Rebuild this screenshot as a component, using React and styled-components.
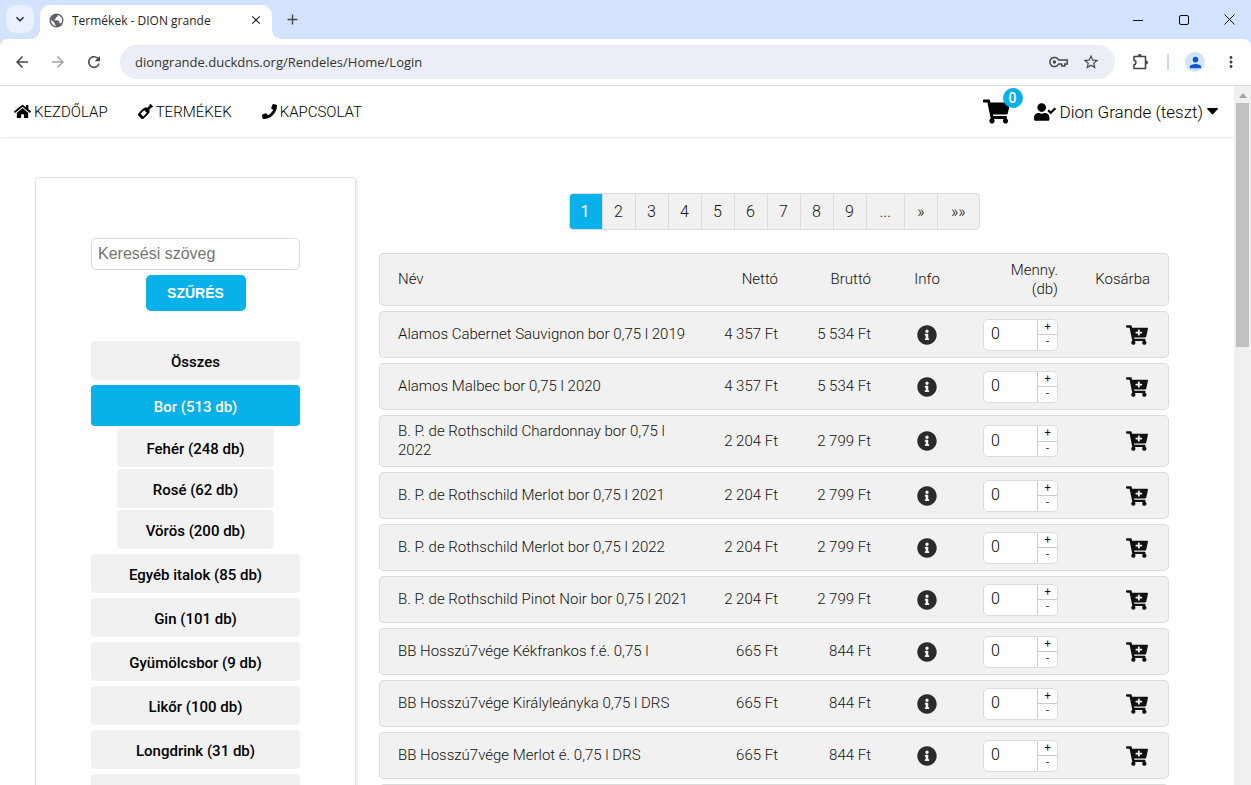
import { useState } from "react";
import styled, { createGlobalStyle, css } from "styled-components";
import {
  FaHome,
  FaWineBottle,
  FaPhone,
  FaShoppingCart,
  FaUserCheck,
  FaInfoCircle,
  FaCartPlus,
} from "react-icons/fa";
import {
  MdArrowBack,
  MdArrowForward,
  MdRefresh,
  MdOutlineStarBorder,
  MdMoreVert,
  MdPerson,
  MdClose,
  MdAdd,
  MdKeyboardArrowDown,
} from "react-icons/md";

const GlobalStyle = createGlobalStyle`
  * {
    box-sizing: border-box;
  }

  body {
    margin: 0;
    background: #fff;
    color: #111;
    font-family: Roboto, "Liberation Sans", sans-serif;
    font-size: 15px;
    font-weight: 300;
  }

  button,
  input {
    margin: 0;
    font: inherit;
    color: inherit;
  }

  button {
    padding: 0;
    border: 0;
    background: none;
  }

  svg {
    display: block;
    flex: none;
  }
`;

const Window = styled.div`
  display: flex;
  flex-direction: column;
  height: 100vh;
  overflow: hidden;
`;

/* Browser frame */

const Frame = styled.div`
  flex: none;
  background: #d3e3fd;
`;

const TabStrip = styled.div`
  display: flex;
  align-items: flex-end;
  height: 39px;
  padding-left: 6px;
`;

const TabSearch = styled.button`
  display: grid;
  place-items: center;
  width: 28px;
  height: 28px;
  margin: 0 6px 6px 0;
  border-radius: 10px;
  background: #e9f1fe;
  color: #1f1f1f;

  path {
    stroke: currentColor;
  }
`;

const Tab = styled.div`
  position: relative;
  display: flex;
  align-items: center;
  width: 232px;
  height: 34px;
  padding: 0 9px 4px;
  border-radius: 10px 10px 0 0;
  background: #fff;
  color: #1f1f1f;
  font: 400 12px "Open Sans", sans-serif;

  &::before,
  &::after {
    content: "";
    position: absolute;
    bottom: 0;
    width: 10px;
    height: 10px;
  }

  &::before {
    right: 100%;
    background: radial-gradient(circle at 0 0, transparent 10px, #fff 10px);
  }

  &::after {
    left: 100%;
    background: radial-gradient(circle at 100% 0, transparent 10px, #fff 10px);
  }
`;

const TabTitle = styled.span`
  flex: 1;
  padding-left: 8px;
`;

const NewTab = styled.button`
  padding: 0 12px 11px;
  color: #474747;
`;

const WindowButtons = styled.div`
  display: flex;
  align-self: stretch;
  margin-left: auto;
`;

const WindowButton = styled.button`
  display: grid;
  place-items: center;
  width: 46px;
  color: #000;

  &:last-child {
    width: 44px;
  }
`;

const Toolbar = styled.div`
  display: flex;
  align-items: center;
  height: 47px;
  padding: 0 11px 0 13px;
  border-bottom: 1px solid #dadce0;
  border-radius: 8px 8px 0 0;
  background: #fff;
  color: #474747;
`;

const NavButtons = styled.div`
  display: flex;
  gap: 18px;
`;

const ToolButton = styled.button`
  opacity: ${(props) => (props.disabled ? 0.5 : 1)};
`;

const AddressBar = styled.div`
  display: flex;
  flex: 1;
  align-items: center;
  gap: 14px;
  height: 34px;
  margin: 0 17px;
  padding: 0 15px;
  border-radius: 17px;
  background: #ebeef7;
`;

const Address = styled.input`
  flex: 1;
  min-width: 0;
  padding: 0;
  border: 0;
  outline: 0;
  background: none;
  color: #333;
  font: 400 13px "Open Sans", sans-serif;
`;

const ToolDivider = styled.span`
  width: 2px;
  height: 16px;
  margin: 0 16px 0 17px;
  background: #c7dafa;
`;

const Profile = styled.button`
  display: grid;
  place-items: center;
  width: 20px;
  height: 20px;
  margin-right: 17px;
  border-radius: 50%;
  background: #d3e3fd;
  color: #0b57d0;
`;

/* Page */

const Viewport = styled.div`
  display: flex;
  flex: 1;
  min-height: 0;
`;

const Page = styled.div`
  flex: 1;
  min-width: 0;
  overflow: hidden;
`;

const Scrollbar = styled.div`
  display: flex;
  flex-direction: column;
  align-items: center;
  width: 17px;
  background: #f0f0f0;
`;

const ScrollArrow = styled.span`
  margin: 7px 0 5px;
  border: 4px solid transparent;
  border-top: 0;
  border-bottom: 5px solid #a3a3a3;
`;

const ScrollThumb = styled.span`
  width: 13px;
  height: 244px;
  background: #c1c1c1;
`;

const Header = styled.header`
  display: flex;
  align-items: center;
  justify-content: space-between;
  height: 51px;
  padding: 0 16px 0 14px;
  box-shadow: 0 1px 3px rgba(0, 0, 0, 0.12);
  color: #000;
`;

const Menu = styled.nav`
  display: flex;
  gap: 30px;
`;

const MenuLink = styled.a`
  display: flex;
  align-items: center;
  gap: 3px;
  color: #000;
  text-decoration: none;
`;

const Account = styled.div`
  display: flex;
  align-items: center;
  gap: 24px;
`;

const CartLink = styled.a`
  position: relative;
  color: #000;
`;

const CartBadge = styled.span`
  position: absolute;
  top: -10px;
  right: -13px;
  width: 20px;
  border-radius: 50%;
  background: #08b1ea;
  color: #fff;
  font-size: 14px;
  font-weight: 500;
  line-height: 20px;
  text-align: center;
`;

const UserButton = styled.button`
  display: flex;
  align-items: center;
  gap: 4px;
  font-size: 17px;
`;

const Content = styled.main`
  display: flex;
  align-items: flex-start;
  gap: 23px;
  padding: 40px 65px 40px 35px;
`;

const Sidebar = styled.aside`
  flex: none;
  width: 321px;
  padding: 60px 55px;
  border: 1px solid #dee2e6;
  border-radius: 4px;
  box-shadow: 1px 1px 3px rgba(0, 0, 0, 0.1);
`;

const SearchForm = styled.form`
  display: flex;
  flex-direction: column;
  align-items: center;
  gap: 5px;
  margin-bottom: 30px;
`;

const SearchInput = styled.input`
  width: 100%;
  height: 32px;
  padding: 0 6px;
  border: 1px solid #d9d9d9;
  border-radius: 5px;
  font: 400 16px "Liberation Sans", sans-serif;

  &::placeholder {
    color: #757575;
  }
`;

const FilterButton = styled.button`
  width: 100px;
  height: 36px;
  border-radius: 5px;
  background: #08b1ea;
  color: #fff;
  font: 700 14px "Liberation Sans", sans-serif;
`;

const Categories = styled.div`
  display: flex;
  flex-direction: column;
  gap: 5px;
`;

const SubCategories = styled.div`
  display: flex;
  flex-direction: column;
  gap: 2px;
  margin-top: -3px;
  padding: 0 26px;
`;

const Category = styled.button`
  height: 39px;
  padding-top: 2px;
  border-radius: 4px;
  background: #f1f1f1;
  color: #000;
  font-weight: 500;

  ${(props) =>
    props.$active &&
    css`
      height: 41px;
      background: #08b1ea;
      color: #fff;
    `}
`;

const Products = styled.section`
  display: flex;
  flex: 1;
  flex-direction: column;
  align-items: center;
  gap: 18px;
  min-width: 0;
  padding-top: 16px;
`;

const Pagination = styled.nav`
  display: flex;
  height: 37px;
  overflow: hidden;
  border: 1px solid #dcdcdc;
  border-radius: 4px;
  background: #f1f1f1;
`;

const PageButton = styled.button`
  min-width: 33px;
  padding: 0 11px;
  border-left: 1px solid #dcdcdc;
  font-size: 16px;

  ${(props) =>
    props.$active &&
    css`
      margin: -1px 0 -1px -1px;
      border: 0;
      background: #08b1ea;
      color: #fff;
      font-weight: 400;
    `}

  ${(props) =>
    props.$wide &&
    css`
      padding: 0 13px;
    `}
`;

const Table = styled.table`
  width: 100%;
  table-layout: fixed;
  border-collapse: separate;
  border-spacing: 0 5px;
  line-height: 19px;
`;

const Row = styled.tr`
  height: ${(props) => (props.$head ? 53 : 47)}px;
`;

const cell = css`
  padding: 6px 0;
  border: solid #dcdcdc;
  border-width: 1px 0;
  background: #f1f1f1;
  font-weight: 300;
  text-align: ${(props) => props.$align || "left"};

  &:first-child {
    padding-left: 18px;
    border-left-width: 1px;
    border-radius: 5px 0 0 5px;
  }

  &:last-child {
    padding-right: 18px;
    border-right-width: 1px;
    border-radius: 0 5px 5px 0;
  }
`;

const HeadCell = styled.th`
  ${cell}

  &:nth-child(2) {
    width: 78px;
  }

  &:nth-child(3) {
    width: 93px;
  }

  &:nth-child(4) {
    width: 112px;
  }

  &:nth-child(5) {
    width: 75px;
  }

  &:nth-child(6) {
    width: 111px;
  }
`;

const Cell = styled.td`
  ${cell}
`;

const IconButton = styled.button`
  display: inline-block;
  vertical-align: middle;
  color: ${(props) => props.$color};
`;

const CartCell = styled(Cell)`
  && {
    padding-right: 20px;
  }
`;

const Stepper = styled.div`
  display: inline-flex;
  width: 75px;
  height: 32px;
  overflow: hidden;
  border: 1px solid #dcdcdc;
  border-radius: 5px;
  background: #fff;
  vertical-align: middle;
`;

const StepperInput = styled.input`
  flex: 1;
  min-width: 0;
  padding: 0 7px 2px;
  border: 0;
  outline: 0;
  background: none;
  color: #000;
  font-size: 16px;
`;

const StepperButtons = styled.div`
  display: flex;
  flex-direction: column;
  width: 20px;
  border-left: 1px solid #ccc;
`;

const StepperButton = styled.button`
  flex: 1;
  font-size: 11px;
  font-weight: 400;
  line-height: 14px;

  & + & {
    border-top: 1px solid #ccc;
  }
`;

const categories = [
  { name: "Összes" },
  {
    name: "Bor (513 db)",
    active: true,
    children: ["Fehér (248 db)", "Rosé (62 db)", "Vörös (200 db)"],
  },
  { name: "Egyéb italok (85 db)" },
  { name: "Gin (101 db)" },
  { name: "Gyümölcsbor (9 db)" },
  { name: "Likőr (100 db)" },
  { name: "Longdrink (31 db)" },
  { name: "Pálinka (120 db)" },
];

const pages = ["1", "2", "3", "4", "5", "6", "7", "8", "9", "...", "»", "»»"];

const products = [
  { name: "Alamos Cabernet Sauvignon bor 0,75 l 2019", net: "4 357 Ft", gross: "5 534 Ft" },
  { name: "Alamos Malbec bor 0,75 l 2020", net: "4 357 Ft", gross: "5 534 Ft" },
  { name: "B. P. de Rothschild Chardonnay bor 0,75 l 2022", net: "2 204 Ft", gross: "2 799 Ft" },
  { name: "B. P. de Rothschild Merlot bor 0,75 l 2021", net: "2 204 Ft", gross: "2 799 Ft" },
  { name: "B. P. de Rothschild Merlot bor 0,75 l 2022", net: "2 204 Ft", gross: "2 799 Ft" },
  { name: "B. P. de Rothschild Pinot Noir bor 0,75 l 2021", net: "2 204 Ft", gross: "2 799 Ft" },
  { name: "BB Hosszú7vége Kékfrankos f.é. 0,75 l", net: "665 Ft", gross: "844 Ft" },
  { name: "BB Hosszú7vége Királyleányka 0,75 l DRS", net: "665 Ft", gross: "844 Ft" },
  { name: "BB Hosszú7vége Merlot é. 0,75 l DRS", net: "665 Ft", gross: "844 Ft" },
  { name: "BB Hosszú7vége Olaszrizling 0,75 l", net: "665 Ft", gross: "844 Ft" },
];

const GlobeIcon = () => (
  <svg width="15" height="15" viewBox="0 0 15 15">
    <circle cx="7.5" cy="7.5" r="7" fill="#5f6368" />
    <path
      d="M8.6 2v1.6L7 4.5v1.3H5.6v1.4h3.2l1.6 1.6v1.4h1.4l.9-.6A5.6 5.6 0 0 0 8.6 2zM2 6.8l3.6 3v1.4l1.5 1.2V13A5.6 5.6 0 0 1 2 6.8z"
      fill="#fff"
    />
  </svg>
);

const KeyIcon = () => (
  <svg width="19" height="12" viewBox="0 0 19 12" fill="none" stroke="currentColor" strokeWidth="1.5">
    <path d="M9.6 4A4.6 4.6 0 1 0 9.6 8h3v2h3.2V8h2.4V4z" />
    <circle cx="5.4" cy="6" r="1.7" fill="currentColor" stroke="none" />
  </svg>
);

const PuzzleIcon = () => (
  <svg width="18" height="18" viewBox="0 0 18 18" fill="none" stroke="currentColor" strokeWidth="1.6">
    <path d="M2 3.5h11.5v12H2v-3.6c2.6-.6 2.6-4.2 0-4.8z" strokeLinejoin="round" />
    <path
      d="M5.7 3a2 2 0 0 1 4 0zM14 7.5a2 2 0 0 1 0 4z"
      fill="currentColor"
      stroke="none"
    />
  </svg>
);

const CaretIcon = () => (
  <svg width="11" height="7" fill="currentColor">
    <path d="M1 0h9q1.400 .2.600 1.300L6.200 6q-.7.700-1.400 0L.4 1.300Q-.4.200 1 0z" />
  </svg>
);

function BrowserFrame() {
  return (
    <Frame>
      <TabStrip>
        <TabSearch aria-label="Lapok keresése">
          <MdKeyboardArrowDown size={16} />
        </TabSearch>
        <Tab>
          <GlobeIcon />
          <TabTitle>Termékek - DION grande</TabTitle>
          <button aria-label="Lap bezárása">
            <MdClose size={14} />
          </button>
        </Tab>
        <NewTab aria-label="Új lap">
          <MdAdd size={17} />
        </NewTab>
        <WindowButtons>
          <WindowButton aria-label="Kis méret">
            <svg width="10" height="10" stroke="currentColor">
              <path d="M0 5.5h10" />
            </svg>
          </WindowButton>
          <WindowButton aria-label="Teljes méret">
            <svg width="10" height="10" fill="none" stroke="currentColor">
              <rect x=".5" y=".5" width="9" height="9" rx="1.5" />
            </svg>
          </WindowButton>
          <WindowButton aria-label="Bezárás">
            <svg width="11" height="11" stroke="currentColor">
              <path d="M.5.5l10 10M10.5.5l-10 10" />
            </svg>
          </WindowButton>
        </WindowButtons>
      </TabStrip>
      <Toolbar>
        <NavButtons>
          <ToolButton aria-label="Vissza">
            <MdArrowBack size={18} />
          </ToolButton>
          <ToolButton aria-label="Előre" disabled>
            <MdArrowForward size={18} />
          </ToolButton>
          <ToolButton aria-label="Frissítés">
            <MdRefresh size={18} />
          </ToolButton>
        </NavButtons>
        <AddressBar>
          <Address aria-label="Cím" defaultValue="diongrande.duckdns.org/Rendeles/Home/Login" />
          <ToolButton aria-label="Jelszavak">
            <KeyIcon />
          </ToolButton>
          <ToolButton aria-label="Könyvjelző">
            <MdOutlineStarBorder size={18} />
          </ToolButton>
        </AddressBar>
        <ToolButton aria-label="Bővítmények">
          <PuzzleIcon />
        </ToolButton>
        <ToolDivider />
        <Profile aria-label="Profil">
          <MdPerson size={17} />
        </Profile>
        <ToolButton aria-label="Menü">
          <MdMoreVert size={18} />
        </ToolButton>
      </Toolbar>
    </Frame>
  );
}

function Quantity({ label }) {
  const [value, setValue] = useState(0);

  return (
    <Stepper>
      <StepperInput
        aria-label={label}
        value={value}
        onChange={(e) => setValue(Number(e.target.value) || 0)}
      />
      <StepperButtons>
        <StepperButton aria-label="Több" onClick={() => setValue(value + 1)}>
          +
        </StepperButton>
        <StepperButton aria-label="Kevesebb" onClick={() => setValue(Math.max(0, value - 1))}>
          -
        </StepperButton>
      </StepperButtons>
    </Stepper>
  );
}

function ProductTable() {
  return (
    <Table>
      <thead>
        <Row $head>
          <HeadCell>Név</HeadCell>
          <HeadCell $align="right">Nettó</HeadCell>
          <HeadCell $align="right">Bruttó</HeadCell>
          <HeadCell $align="center">Info</HeadCell>
          <HeadCell $align="right">
            Menny.
            <br />
            (db)
          </HeadCell>
          <HeadCell $align="right">Kosárba</HeadCell>
        </Row>
      </thead>
      <tbody>
        {products.map((item) => (
          <Row key={item.name}>
            <Cell>{item.name}</Cell>
            <Cell $align="right">{item.net}</Cell>
            <Cell $align="right">{item.gross}</Cell>
            <Cell $align="center">
              <IconButton $color="#2b2b2b" aria-label="Info">
                <FaInfoCircle size={20} />
              </IconButton>
            </Cell>
            <Cell $align="right">
              <Quantity label={item.name} />
            </Cell>
            <CartCell $align="right">
              <IconButton $color="#111" aria-label="Kosárba">
                <FaCartPlus size={22} />
              </IconButton>
            </CartCell>
          </Row>
        ))}
      </tbody>
    </Table>
  );
}

function App() {
  return (
    <Window>
      <GlobalStyle />
      <BrowserFrame />
      <Viewport>
        <Page>
          <Header>
            <Menu>
              <MenuLink href="#">
                <FaHome size={17} />
                KEZDŐLAP
              </MenuLink>
              <MenuLink href="#">
                <FaWineBottle size={15} />
                TERMÉKEK
              </MenuLink>
              <MenuLink href="#">
                <FaPhone size={15} />
                KAPCSOLAT
              </MenuLink>
            </Menu>
            <Account>
              <CartLink href="#" aria-label="Kosár">
                <FaShoppingCart size={27} />
                <CartBadge>0</CartBadge>
              </CartLink>
              <UserButton>
                <FaUserCheck size={22} />
                Dion Grande (teszt)
                <CaretIcon />
              </UserButton>
            </Account>
          </Header>
          <Content>
            <Sidebar>
              <SearchForm onSubmit={(e) => e.preventDefault()}>
                <SearchInput aria-label="Keresési szöveg" placeholder="Keresési szöveg" />
                <FilterButton>SZŰRÉS</FilterButton>
              </SearchForm>
              <Categories>
                {categories.map((item) => [
                  <Category key={item.name} $active={item.active}>
                    {item.name}
                  </Category>,
                  item.children && (
                    <SubCategories key="sub">
                      {item.children.map((name) => (
                        <Category key={name}>{name}</Category>
                      ))}
                    </SubCategories>
                  ),
                ])}
              </Categories>
            </Sidebar>
            <Products>
              <Pagination aria-label="Lapozás">
                {pages.map((page) => (
                  <PageButton key={page} $active={page === "1"} $wide={page === "..." || page === "»»"}>
                    {page}
                  </PageButton>
                ))}
              </Pagination>
              <ProductTable />
            </Products>
          </Content>
        </Page>
        <Scrollbar>
          <ScrollArrow />
          <ScrollThumb />
        </Scrollbar>
      </Viewport>
    </Window>
  );
}

export default App;
